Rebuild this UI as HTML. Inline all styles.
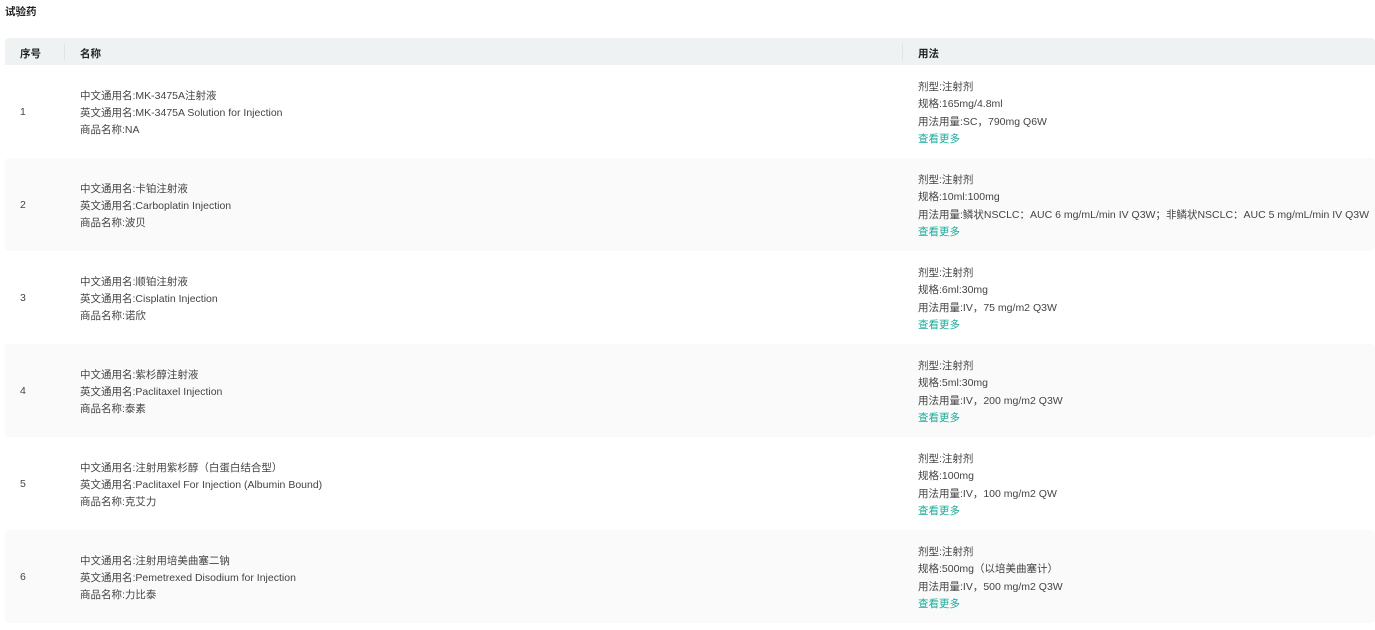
<!DOCTYPE html>
<html><head><meta charset="utf-8"><style>
body{margin:0;background:#fff;font-family:"Liberation Sans","Noto Sans CJK SC",sans-serif;color:#444;font-size:10.5px;width:1375px;height:630px;overflow:hidden;position:relative}
.title{position:absolute;left:5px;top:4px;font-size:10.5px;font-weight:bold;color:#222}
.hd{position:absolute;left:5px;top:38px;width:1370px;height:27px;background:#eef2f2;border-radius:4px 4px 0 0;font-weight:bold;color:#222}
.hd span{position:absolute;top:8px}
.sep{position:absolute;top:6px;width:1px;height:16px;background:#dde6e6}
.row{position:absolute;left:5px;width:1370px;height:93px;border-radius:4px;white-space:nowrap}
.row.g{background:#fafafa}
.n{position:absolute;left:15px;top:41px}
.c{position:absolute;left:75px;top:23px;line-height:17px}
.u{position:absolute;left:913px;top:14px;line-height:17.3px}
.u a{color:#1aab9b;text-decoration:none;display:block}
</style></head><body>
<div class="title">试验药</div>
<div class="hd"><span style="left:15px">序号</span><div class="sep" style="left:59px"></div><span style="left:75px">名称</span><div class="sep" style="left:897px"></div><span style="left:913px">用法</span></div>

<div class="row" style="top:65px"><div class="n">1</div><div class="c">中文通用名:MK-3475A注射液<br>英文通用名:MK-3475A Solution for Injection<br>商品名称:NA</div><div class="u">剂型:注射剂<br>规格:165mg/4.8ml<br>用法用量:SC，790mg Q6W<a>查看更多</a></div></div>

<div class="row g" style="top:158px"><div class="n">2</div><div class="c">中文通用名:卡铂注射液<br>英文通用名:Carboplatin Injection<br>商品名称:波贝</div><div class="u">剂型:注射剂<br>规格:10ml:100mg<br>用法用量:鳞状NSCLC：AUC 6 mg/mL/min IV Q3W；非鳞状NSCLC：AUC 5 mg/mL/min IV Q3W<a>查看更多</a></div></div>

<div class="row" style="top:251px"><div class="n">3</div><div class="c">中文通用名:顺铂注射液<br>英文通用名:Cisplatin Injection<br>商品名称:诺欣</div><div class="u">剂型:注射剂<br>规格:6ml:30mg<br>用法用量:IV，75 mg/m2 Q3W<a>查看更多</a></div></div>

<div class="row g" style="top:344px"><div class="n">4</div><div class="c">中文通用名:紫杉醇注射液<br>英文通用名:Paclitaxel Injection<br>商品名称:泰素</div><div class="u">剂型:注射剂<br>规格:5ml:30mg<br>用法用量:IV，200 mg/m2 Q3W<a>查看更多</a></div></div>

<div class="row" style="top:437px"><div class="n">5</div><div class="c">中文通用名:注射用紫杉醇（白蛋白结合型）<br>英文通用名:Paclitaxel For Injection (Albumin Bound)<br>商品名称:克艾力</div><div class="u">剂型:注射剂<br>规格:100mg<br>用法用量:IV，100 mg/m2 QW<a>查看更多</a></div></div>

<div class="row g" style="top:530px"><div class="n">6</div><div class="c">中文通用名:注射用培美曲塞二钠<br>英文通用名:Pemetrexed Disodium for Injection<br>商品名称:力比泰</div><div class="u">剂型:注射剂<br>规格:500mg（以培美曲塞计）<br>用法用量:IV，500 mg/m2 Q3W<a>查看更多</a></div></div>
</body></html>
